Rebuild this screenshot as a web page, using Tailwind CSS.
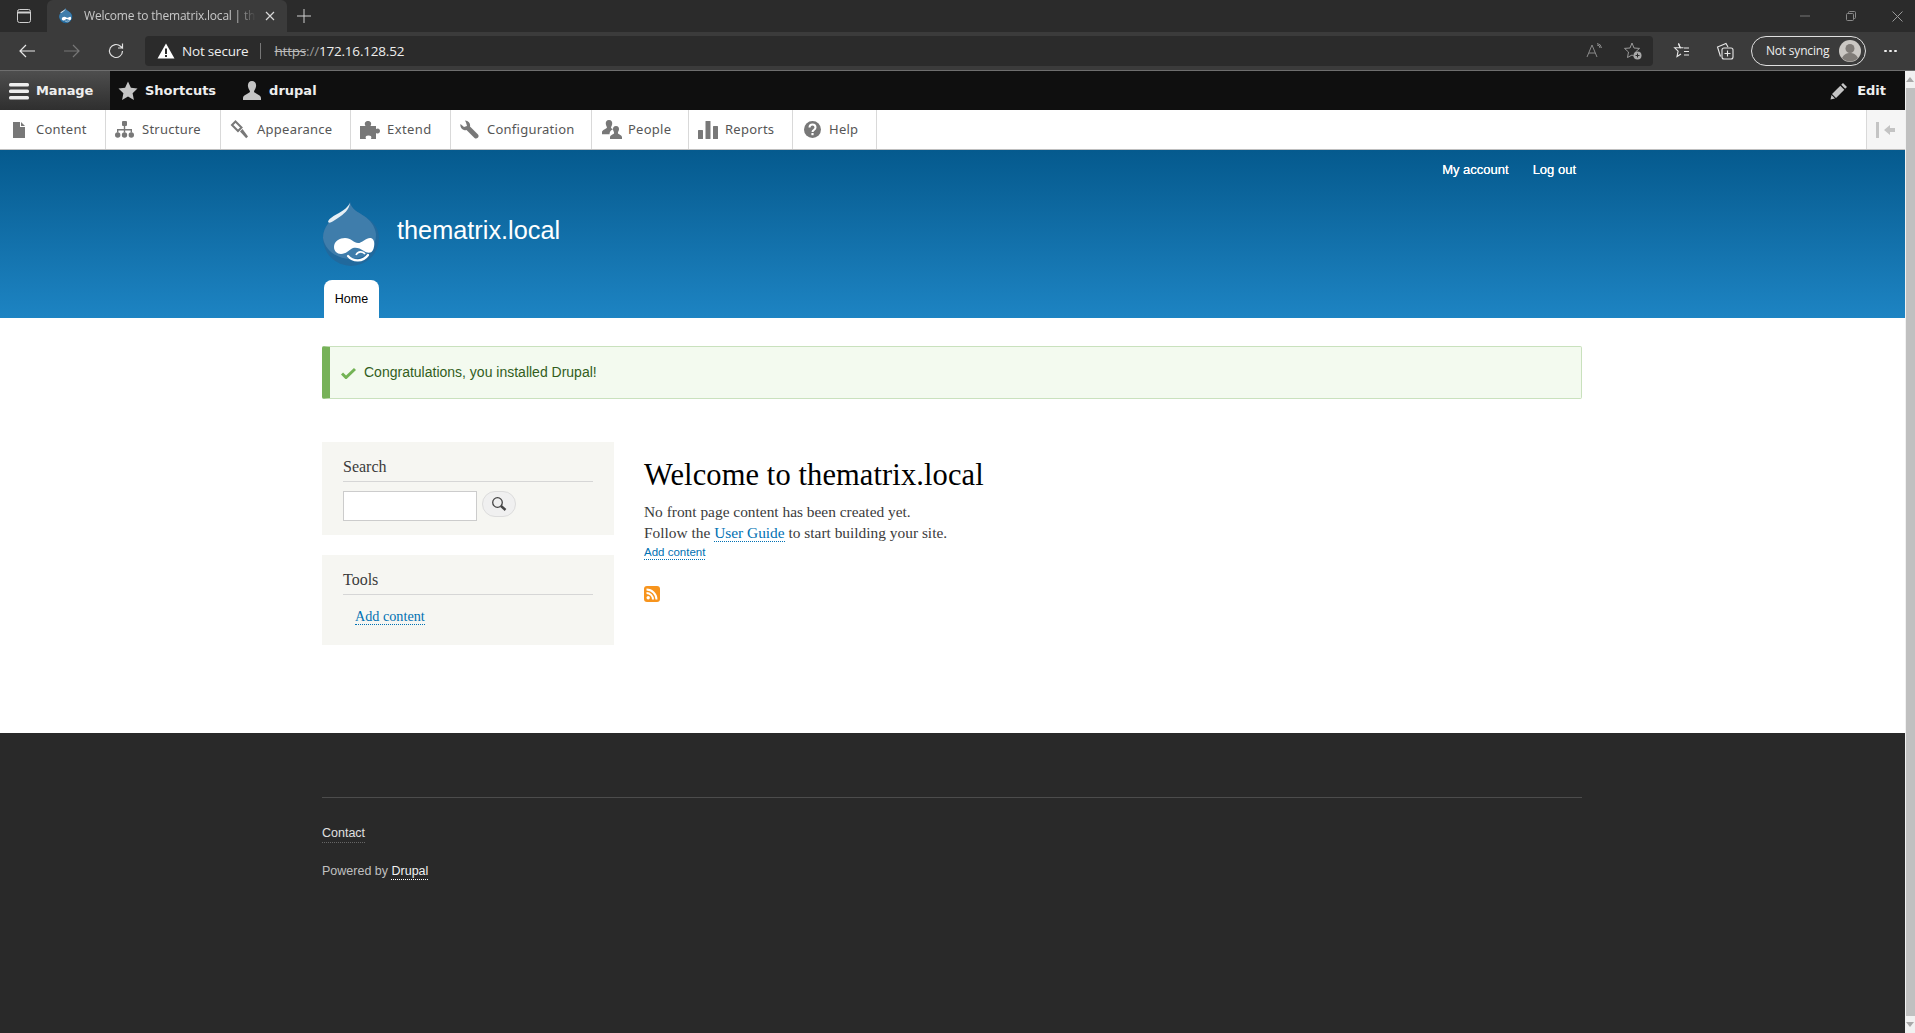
<!DOCTYPE html>
<html lang="en">
<head>
<meta charset="utf-8">
<title>Welcome to thematrix.local</title>
<script src="https://cdn.jsdelivr.net/npm/@tailwindcss/browser@4"></script>
</head>
<body class="h-[1033px] w-[1915px] overflow-hidden bg-white font-['Liberation_Sans',sans-serif]">
<svg class="hidden" width="0" height="0">
  <symbol id="drop" viewBox="0 0 60 66">
    <path d="M28 0C29 7 36 10 42 14 51 19 57 26 57 36A28 28 0 0 1 1 36C1 24 10 17 16 13 21 10 27 6 28 0z" fill="#21699d"/>
    <path d="M28 0C29 7 36 10 42 14 48 18 53 24 54 32 54 46 46 56 30 57 14 57 3 48 1 36 1 24 10 17 16 13 21 10 27 6 28 0z" fill="#3f7dab"/>
    <path d="M28 1C27 8 22 12 16 16 11 19 8 22 6 20 7 16 12 14 17 11 22 8 26 5 28 1z" fill="#e6eff5"/>
    <path d="M12 45C12 39 18 36 23 36 29 36 32 41 36 41 40 41 45 35 49 36 53 37 53 44 51 48 49 52 45 51 42 49 38 46 34 45 31 46 27 48 24 52 19 52 15 52 12 49 12 45z" fill="#fff"/>
    <path d="M26 54C31 60 41 60 46 53" fill="none" stroke="#fff" stroke-width="2.200" stroke-linecap="round"/>
    <path d="M34 53C36 49 41 49 43 52" fill="none" stroke="#fff" stroke-width="1.600"/>
  </symbol>
</svg>

<!-- browser chrome -->
<div class="flex h-[32px] items-end bg-[#2b2b2b] text-[12px] text-[#c8c8c8] font-['Open_Sans',sans-serif]">
  <div class="flex h-full w-[38px] items-center justify-center pl-[10px]">
    <svg width="14" height="14" viewBox="0 0 14 14" fill="none" stroke="#d0d0d0" stroke-width="1"><rect x=".5" y=".5" width="13" height="13" rx="2"/><path d="M1 3.500h12" stroke-width="2"/></svg>
  </div>
  <div class="ml-[9px] flex h-full w-[240px] items-center rounded-t-[6px] bg-[#3b3b3b] pl-[12px]">
    <svg width="14" height="16" class="mr-[11px] shrink-0"><use href="#drop"/></svg>
    <span class="w-[172px] overflow-hidden whitespace-nowrap tracking-[-0.2px] [mask-image:linear-gradient(to_right,#000_88%,transparent)]">Welcome to thematrix.local | the</span>
    <svg class="ml-[9px] shrink-0" width="10" height="10" viewBox="0 0 10 10" stroke="#d8d8d8" stroke-width="1.2"><path d="M1 1l8 8M9 1l-8 8"/></svg>
  </div>
  <div class="ml-[10px] flex h-full items-center">
    <svg width="14" height="14" viewBox="0 0 14 14" stroke="#d0d0d0" stroke-width="1"><path d="M7 0v14M0 7h14"/></svg>
  </div>
  <div class="ml-auto flex h-full items-center gap-[36px] pr-[12px]">
    <svg width="10" height="10" viewBox="0 0 10 10" stroke="#777" stroke-width="1"><path d="M0 5h10"/></svg>
    <svg width="10" height="10" viewBox="0 0 10 10" fill="none" stroke="#8a8a8a" stroke-width="1"><rect x=".5" y="2.5" width="7" height="7" rx="1"/><path d="M2.5 2.5V1.5a1 1 0 0 1 1-1h5a1 1 0 0 1 1 1v5a1 1 0 0 1-1 1h-1"/></svg>
    <svg width="11" height="11" viewBox="0 0 11 11" stroke="#9a9a9a" stroke-width="1"><path d="M.5.5l10 10M10.500.5l-10 10"/></svg>
  </div>
</div>
<div class="flex h-[39px] items-center border-b border-[#6e6e6e] bg-[#3b3b3b] font-['Open_Sans',sans-serif]">
  <div class="flex w-[145px] shrink-0 items-center pl-[18px]">
    <svg width="18" height="16" viewBox="0 0 18 16" fill="none" stroke="#e8e8e8" stroke-width="1.2"><path d="M17 8H2M8 2L2 8l6 6"/></svg>
    <svg class="ml-[27px]" width="18" height="16" viewBox="0 0 18 16" fill="none" stroke="#777" stroke-width="1.2"><path d="M1 8h15M10 2l6 6-6 6"/></svg>
    <svg class="ml-[26px]" width="18" height="18" viewBox="0 0 18 18" fill="none" stroke="#e0e0e0" stroke-width="1.2"><path d="M15.500 9a6.500 6.500 0 1 1-2-4.700L15.500 6V1.500M15.500 6H11"/></svg>
  </div>
  <div class="flex h-[30px] w-[1508px] shrink-0 items-center rounded-[4px] bg-[#2b2b2b] pl-[12px] text-white">
    <svg width="18" height="16" viewBox="0 0 18 16"><path d="M9 0.500L17.500 15.500H.5z" fill="#fff"/><path d="M8 5.500h2v5.500H8zM8 12h2v2H8z" fill="#2b2b2b"/></svg>
    <span class="ml-[7px] text-[13.5px] tracking-[-0.2px] text-[#eee]">Not secure</span>
    <span class="ml-[12px] h-[16px] w-px bg-[#777]"></span>
    <span class="ml-[13px] text-[13.5px] tracking-[-0.2px] text-[#eee]"><span class="text-[#bbb] line-through">https</span><span class="text-[#999]">://</span>172.16.128.52</span>
    <svg class="ml-auto" width="16" height="16" viewBox="0 0 16 16" fill="none" stroke="#8a8a8a" stroke-width="1"><path d="M1 14L6 2l5 12M3 10h6M11 2a3 3 0 0 1 3 3M11 .5a5 5 0 0 1 4.500 4.500"/></svg>
    <svg class="ml-[22px] mr-[11px]" width="18" height="18" viewBox="0 0 18 18"><path d="M8 1l2 5 5.500.4-4 3.600 1 5.500L8 13l-4.500 2.500 1-5.500-4-3.600L6 6z" fill="none" stroke="#9a9a9a"/><circle cx="13.500" cy="13.500" r="4" fill="#a8a8a8"/><path d="M13.500 11.500v4M11.500 13.500h4" stroke="#2b2b2b"/></svg>
  </div>
  <svg class="ml-[19px]" width="18" height="18" viewBox="0 0 18 18" fill="none" stroke="#e8e8e8" stroke-width="1.1"><path d="M6.500 1.500l1.700 4.300h-5.500l3.400 3.300-1.100 5.400 4-2.500"/><path d="M6.500 1.500L8.200 5.800h3.300"/><path d="M12 6h5M12 9.500h5M12 13h5"/></svg>
  <svg class="ml-[26px]" width="18" height="18" viewBox="0 0 18 18" fill="none" stroke="#e8e8e8" stroke-width="1.1"><path d="M4.500 14.500L1.500 5 10 1.500 12 5"/><rect x="6" y="6" width="11" height="11" rx="2"/><path d="M11.500 8.500v6M8.500 11.500h6"/></svg>
  <div class="ml-[17px] flex h-[30px] w-[115px] items-center rounded-full border border-[#e0e0e0] pl-[14px] text-[12px] tracking-[-0.2px] text-[#eee]">
    <span>Not syncing</span>
    <svg class="ml-[10px]" width="22" height="22" viewBox="0 0 22 22"><circle cx="11" cy="11" r="11" fill="#cbc8c4"/><circle cx="11" cy="8.500" r="4.500" fill="#807c78"/><path d="M3 18c2-4 5-5 8-5s6 1 8 5a11 11 0 0 1-16 0z" fill="#807c78"/></svg>
  </div>
  <span class="ml-[18px] flex gap-[2px]"><i class="h-[2px] w-[3px] rounded-full bg-[#eee]"></i><i class="h-[2px] w-[3px] rounded-full bg-[#eee]"></i><i class="h-[2px] w-[3px] rounded-full bg-[#eee]"></i></span>
</div>

<div class="flex h-[962px]">
  <div class="w-[1905px] shrink-0">
    <!-- admin toolbar -->
    <div class="flex h-[39px] items-center bg-[#0f0f0f] font-['DejaVu_Sans',sans-serif] text-[13px] font-bold text-[#eee]">
      <div class="flex h-full w-[110px] items-center bg-gradient-to-b from-[#4e4e4e] to-[#2f2f2f] pl-[9px]">
        <svg width="20" height="18" viewBox="0 0 20 18" fill="#eee"><rect y="1" width="20" height="3.400" rx="1.500"/><rect y="7.500" width="20" height="3.400" rx="1.500"/><rect y="14" width="20" height="3.400" rx="1.500"/></svg>
        <span class="ml-[7px] tracking-[-0.1px]">Manage</span>
      </div>
      <svg class="ml-[8px]" width="20" height="20" viewBox="0 0 20 20" fill="#c4c4c4"><path d="M10 .5l2.900 6.300 6.600.8-4.900 4.600 1.300 6.800L10 15.600 4.100 19l1.300-6.800L.5 7.600l6.600-.8z"/></svg>
      <span class="ml-[7px]">Shortcuts</span>
      <svg class="ml-[26px]" width="20" height="20" viewBox="0 0 20 20" fill="#c4c4c4"><path d="M10 0c3 0 4.500 2.500 4 5.500-.3 2-1.500 3.500-2 5 0 2 7 3 7 6.500v2H1v-2c0-3.500 7-4.500 7-6.500-.5-1.500-1.700-3-2-5C5.500 2.500 7 0 10 0z"/></svg>
      <span class="ml-[7px]">drupal</span>
      <svg class="ml-auto" width="18" height="18" viewBox="0 0 18 18" fill="#c4c4c4"><path d="M13 1l4 4-1.800 1.800-4-4zM10.300 3.700l4 4L6 16l-4-4zM1.500 13l3.500 3.500-4.500 1z"/></svg>
      <span class="ml-[9px] mr-[19px]">Edit</span>
    </div>
    <!-- admin tray -->
    <div class="flex h-[40px] border-b border-[#bfbfbf] bg-white font-['Noto_Sans',sans-serif] text-[13px] tracking-[0.25px] text-[#565656]">
      <div class="flex w-[106px] items-center border-r border-[#d9d9d9] pl-[12px]">
        <svg width="15" height="16" viewBox="0 0 15 16" fill="#787878"><path d="M1 0h7v5h5v11H1zM9 0l4 4H9z"/></svg>
        <span class="ml-[9px]">Content</span>
      </div>
      <div class="flex w-[115px] items-center border-r border-[#d9d9d9] pl-[9px]">
        <svg width="19" height="17" viewBox="0 0 19 17" fill="#787878"><rect x="7" y="0" width="5" height="5" rx="1"/><path d="M8.800 5h1.400v3h6.800v3.500h-1.400V9.400h-5.400v2.100H8.800V9.400H3.400v2.100H2V8h6.800z"/><circle cx="2.700" cy="14" r="2.700"/><circle cx="9.500" cy="14" r="2.700"/><circle cx="16.300" cy="14" r="2.700"/></svg>
        <span class="ml-[8px]">Structure</span>
      </div>
      <div class="flex w-[130px] items-center border-r border-[#d9d9d9] pl-[9px]">
        <svg width="19" height="19" viewBox="0 0 19 19"><path d="M5.500 1.500l6 6-3.500 3.500-6-6z" fill="none" stroke="#787878" stroke-width="2"/><path d="M10 11.500l2.500-2.500 5.500 7.500-1.800 1.800z" fill="#787878"/></svg>
        <span class="ml-[8px]">Appearance</span>
      </div>
      <div class="flex w-[100px] items-center border-r border-[#d9d9d9] pl-[9px]">
        <svg width="20" height="18" viewBox="0 0 20 18" fill="#787878"><path d="M0 5h5.500C4 2.500 5 0 8 0s4 2.500 2.500 5H16v3c2-1.200 4-.3 4 2s-2 3.200-4 2v6h-5c1-2.500 0-3.500-2.500-3.500S5 15.500 6 18H0z"/></svg>
        <span class="ml-[7px] tracking-[0.4px]">Extend</span>
      </div>
      <div class="flex w-[141px] items-center border-r border-[#d9d9d9] pl-[9px]">
        <svg width="19" height="19" viewBox="0 0 19 19" fill="#787878"><path d="M5 .5a5 5 0 0 1 5 6l8 8a2.500 2.500 0 0 1-3.500 3.500l-8-8A5 5 0 0 1 .5 4l3.500 3 3-1-1-3.500z"/></svg>
        <span class="ml-[8px]">Configuration</span>
      </div>
      <div class="flex w-[97px] items-center border-r border-[#d9d9d9] pl-[10px]">
        <svg width="20" height="19" viewBox="0 0 20 19" fill="#787878"><path d="M7 0c2.500 0 3.500 2 3.200 4-.2 1.400-1 2.500-1.200 3.500 0 .8 1 1.200 2 1.700-2 1-3.500 2.300-3.500 5H0v-2c0-2.500 4.500-3 5-4.700C4.800 6.500 4 5.400 3.800 4 3.500 2 4.500 0 7 0z"/><path d="M14 6c2.300 0 3.200 1.800 3 3.600-.2 1.300-1 2.300-1.100 3.300 0 1.500 4.100 1.700 4.100 4.300V19H8v-1.800c0-2.600 4.100-2.800 4.100-4.300-.1-1-.9-2-1.100-3.300C10.800 7.800 11.700 6 14 6z"/></svg>
        <span class="ml-[6px]">People</span>
      </div>
      <div class="flex w-[104px] items-center border-r border-[#d9d9d9] pl-[9px]">
        <svg width="20" height="18" viewBox="0 0 20 18" fill="#787878"><rect y="9" width="5" height="9" rx=".5"/><rect x="7.500" y="0" width="5" height="18" rx=".5"/><rect x="15" y="5" width="5" height="13" rx=".5"/></svg>
        <span class="ml-[7px]">Reports</span>
      </div>
      <div class="flex w-[84px] items-center border-r border-[#d9d9d9] pl-[11px]">
        <svg width="17" height="17" viewBox="0 0 17 17"><circle cx="8.500" cy="8.500" r="8.500" fill="#787878"/><path d="M5.500 6.500c0-4 6-4 6 0 0 2.500-3 2.500-3 4.500" fill="none" stroke="#fff" stroke-width="2"/><rect x="7.400" y="12" width="2.200" height="2.200" fill="#fff"/></svg>
        <span class="ml-[8px]">Help</span>
      </div>
      <div class="ml-auto flex w-[39px] items-center justify-center border-l border-[#d9d9d9] bg-[#f5f5f5]">
        <svg width="20" height="16" viewBox="0 0 20 16" fill="#c4c4c4"><rect y="0" width="3" height="16"/><path d="M8 8l6-5v3h5v4h-5v3z"/></svg>
      </div>
    </div>

    <!-- site header -->
    <div class="h-[168px] bg-gradient-to-b from-[#055a8e] to-[#1d84c3]">
      <div class="ml-[322px] w-[1260px]">
        <div class="flex h-[40px] items-center justify-end gap-[24px] pr-[6px] text-[13px] text-white">
          <span class="[text-shadow:0_0_0.6px_#fff]">My account</span>
          <span class="[text-shadow:0_0_0.6px_#fff]">Log out</span>
        </div>
        <div class="flex h-[90px] items-center">
          <svg width="60" height="66"><use href="#drop"/></svg>
          <span class="ml-[15px] mt-[-8px] text-[25.3px] text-white">thematrix.local</span>
        </div>
        <div class="ml-[2px] flex h-[38px] w-[55px] items-center justify-center rounded-t-[8px] bg-white text-[12.500px] text-black">Home</div>
      </div>
    </div>

    <!-- main -->
    <div class="h-[415px] bg-white pt-[28px]">
      <div class="ml-[322px] w-[1260px]">
        <div class="flex h-[53px] items-center rounded-[2px] border border-l-[8px] border-[#c9e1bd] border-l-[#77b259] bg-[#f3faef] pl-[11px] text-[14px] text-[#325e1c]">
          <svg width="15" height="12" viewBox="0 0 15 12"><path d="M1 6.500l4 4L14 2" fill="none" stroke="#73b355" stroke-width="3"/></svg>
          <span class="ml-[8px]">Congratulations, you installed Drupal!</span>
        </div>
        <div class="mt-[43px] flex font-['Liberation_Serif',serif]">
          <div class="w-[292px] shrink-0">
            <div class="h-[93px] bg-[#f6f6f2] px-[21px] pt-[15px]">
              <div class="h-[25px] border-b border-[#d6d6d6] text-[16px] leading-[20px] text-[#3b3b3b]">Search</div>
              <div class="mt-[9px] flex">
                <div class="h-[30px] w-[134px] border border-[#cccccc] bg-white"></div>
                <div class="ml-[5px] flex h-[26px] w-[34px] items-center justify-center rounded-full border border-[#dcdcdc] bg-[#f0f0f0]">
                  <svg width="16" height="16" viewBox="0 0 16 16" fill="none" stroke="#444"><circle cx="6.500" cy="6.500" r="4.800" stroke-width="1.300"/><path d="M10 10l4.500 4" stroke-width="2.400"/></svg>
                </div>
              </div>
            </div>
            <div class="mt-[20px] h-[90px] bg-[#f6f6f2] px-[21px] pt-[14px]">
              <div class="h-[26px] border-b border-[#d6d6d6] text-[16px] leading-[21px] text-[#3b3b3b]">Tools</div>
              <a class="ml-[12px] mt-[14px] inline-block border-b border-dotted border-[#0071b3] text-[14.2px] leading-[15px] text-[#0071b3]">Add content</a>
            </div>
          </div>
          <div class="ml-[30px]">
            <h1 class="mt-[14px] text-[30.5px] leading-[38px] tracking-[0.1px] text-black">Welcome to thematrix.local</h1>
            <p class="mt-[7px] text-[15.4px] leading-[21px] text-[#3b3b3b]">No front page content has been created yet.<br>Follow the <a class="border-b border-dotted border-[#0071b3] text-[#0071b3]">User Guide</a> to start building your site.</p>
            <a class="mt-[3px] block w-fit border-b border-dotted border-[#0071b3] font-['Liberation_Sans',sans-serif] text-[11.500px] leading-[13px] text-[#0071b3]">Add content</a>
            <svg class="mt-[26px] block" width="16" height="16" viewBox="0 0 16 16"><rect width="16" height="16" rx="3" fill="#f7941d"/><circle cx="4.200" cy="11.800" r="1.700" fill="#fff"/><path d="M2.500 7a6.500 6.500 0 0 1 6.500 6.500M2.500 3.500a10 10 0 0 1 10 10" fill="none" stroke="#fff" stroke-width="2"/></svg>
          </div>
        </div>
      </div>
    </div>

    <!-- footer -->
    <div class="h-[300px] bg-[#292929] pt-[64px] text-[12.500px]">
      <div class="ml-[322px] w-[1260px] border-t border-[#4c4c4c] pt-[26px] text-[#c0c0c0]">
        <div><a class="inline-block border-b border-dotted border-[#666] pb-[2px] leading-[14px] text-[#e0e0e0]">Contact</a></div>
        <div class="mt-[21px] leading-[14px]">Powered by <a class="border-b border-dotted border-white pb-[1px] text-[#f0f0f0]">Drupal</a></div>
      </div>
    </div>
  </div>

  <!-- scrollbar -->
  <div class="flex w-[10px] shrink-0 flex-col bg-[#f1f1f1]">
    <div class="flex h-[17px] items-center justify-center">
      <svg width="8" height="5" viewBox="0 0 8 5" fill="#a8a8a8"><path d="M4 0l4 5H0z"/></svg>
    </div>
    <div class="ml-[1px] w-[9px] flex-1 bg-[#c0c0c0]"></div>
    <div class="flex h-[17px] items-center justify-center">
      <svg width="8" height="5" viewBox="0 0 8 5" fill="#a8a8a8"><path d="M4 5l4-5H0z"/></svg>
    </div>
  </div>
</div>
</body>
</html>
